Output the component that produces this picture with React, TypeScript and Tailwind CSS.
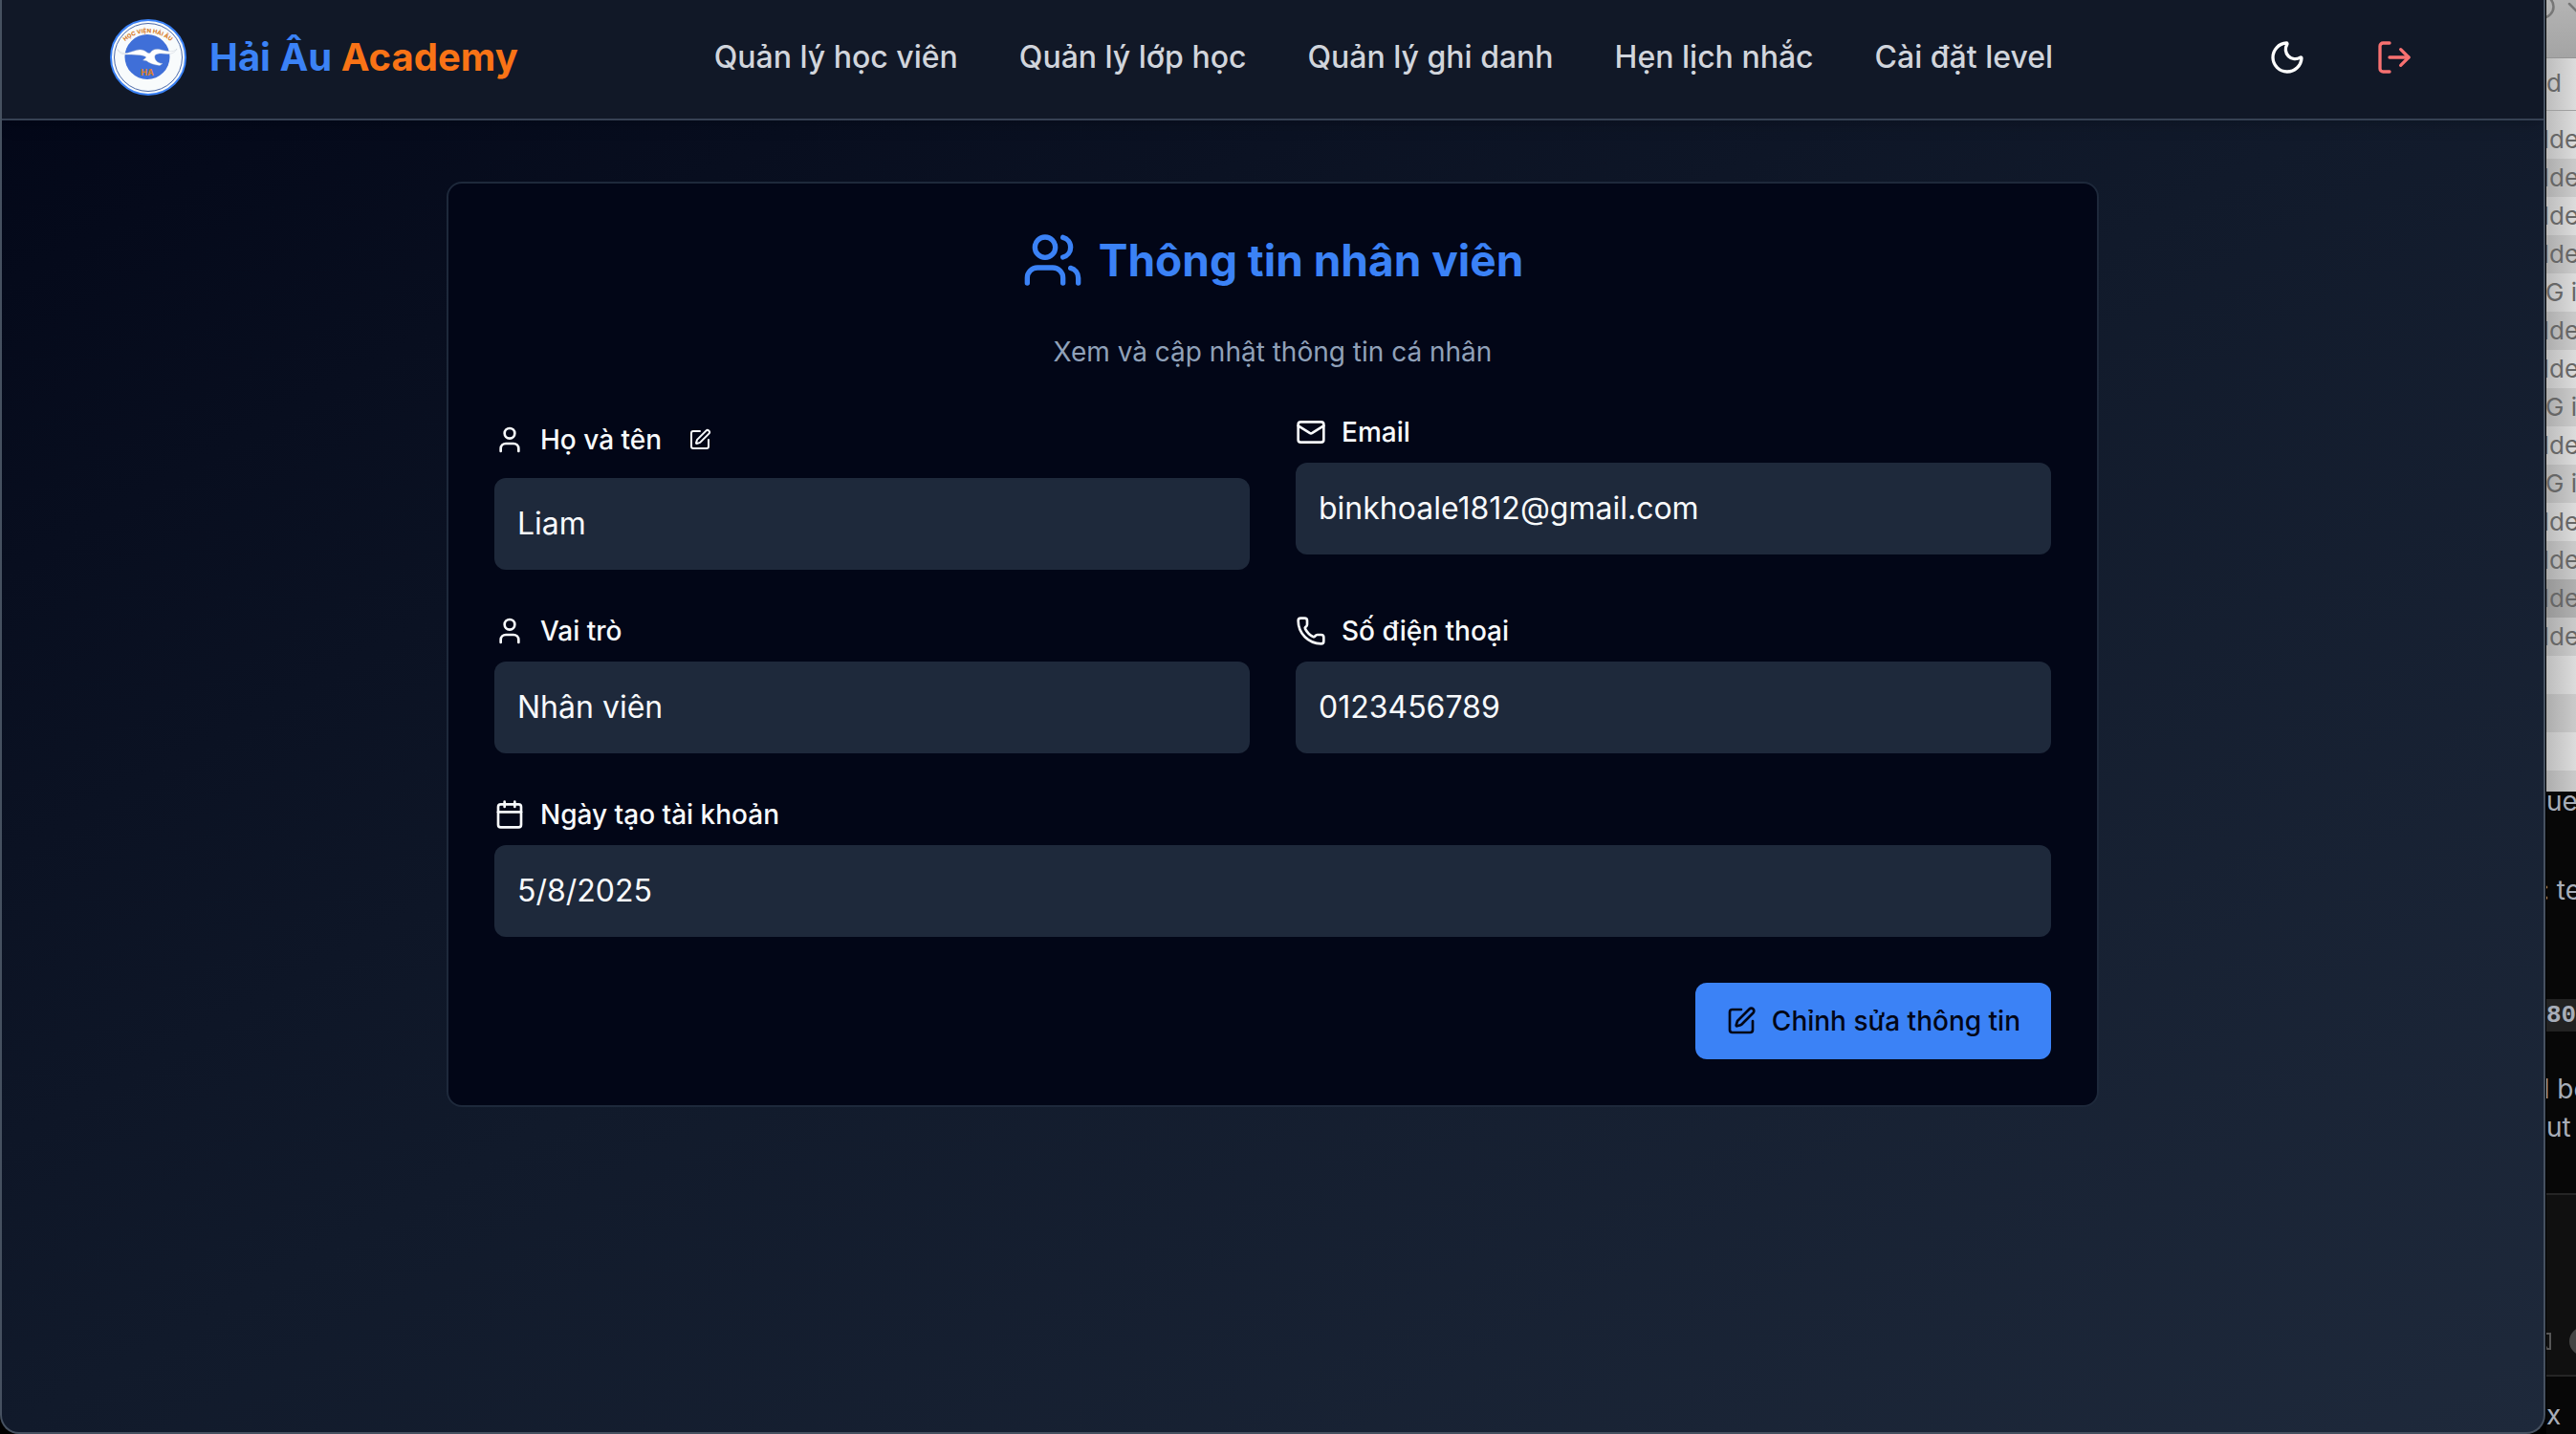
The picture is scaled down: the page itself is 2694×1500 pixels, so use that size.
import type { ReactNode } from "react";
import { Calendar, LogOut, Mail, Moon, Phone, SquarePen, User, Users } from "lucide-react";

const navItems = [
  "Quản lý học viên",
  "Quản lý lớp học",
  "Quản lý ghi danh",
  "Hẹn lịch nhắc",
  "Cài đặt level",
];

const fileRows = ["lde", "lde", "lde", "lde", "G i", "lde", "lde", "G i", "lde", "G i", "lde", "lde", "lde", "lde", "", "", "", ""];
const selectedRow = 12;

function Logo() {
  return (
    <svg viewBox="0 0 80 80" className="size-20" role="img" aria-label="Học viện Hải Âu">
      <circle cx="40" cy="40" r="39" fill="#f8fbfc" stroke="#3b82f6" strokeWidth="2" />
      <circle cx="40" cy="40" r="35.5" fill="none" stroke="#4d6aa8" strokeWidth="1" />
      <circle cx="39" cy="39.5" r="23.5" fill="#3f6fd8" />
      <path id="logo-arc" d="M12 27A36 36 0 0 1 67 27" fill="none" />
      <text fontFamily="Inter, sans-serif" fontSize="6" fontWeight="800" fill="#d9812f">
        <textPath href="#logo-arc" startOffset="50%" textAnchor="middle">HỌC VIỆN HẢI ÂU</textPath>
      </text>
      <path
        d="M8 31.500C10 35 14 36 18 35.500C24 34 30 30 36 33C39 35 40 36 42 35.500C44 32 47 31 51 31.500C58 33 66 36 70 31C68 35 65 36 61 36.500C55 36 50 35 47 38C46 42 49 46 55 46.500L52 48.500C46 48 41 46 38 43.500L34.500 43L38 40C35 36.500 24 37.500 16 37C11 36.500 9 34.500 8 31.500Z"
        fill="#fff"
        stroke="#b9c3cf"
        strokeWidth="0.400"
      />
      <text x="39" y="58.500" textAnchor="middle" fontFamily="Inter, sans-serif" fontSize="9" fontWeight="800" fill="#d9812f">HA</text>
    </svg>
  );
}

function Header() {
  return (
    <header className="relative flex items-center justify-between border-b-2 border-gray-700 bg-[#111827] pt-5 pr-[116px] pb-6 pl-[113px] shadow-lg">
      <a href="#home" className="flex items-center gap-6 text-[40px] leading-[60px] font-bold whitespace-nowrap">
        <Logo />
        <span>
          <span className="text-[#3b82f6]">Hải Âu</span> <span className="text-[#f97316]">Academy</span>
        </span>
      </a>
      <nav className="flex items-center gap-16">
        {navItems.map((item) => (
          <a key={item} href="#nav" className="text-[32px] leading-[48px] font-medium whitespace-nowrap text-gray-300">
            {item}
          </a>
        ))}
      </nav>
      <div className="flex items-center gap-8">
        <button type="button" aria-label="Chế độ tối" className="flex size-20 items-center justify-center text-white">
          <Moon size={40} />
        </button>
        <button type="button" aria-label="Đăng xuất" className="flex size-20 items-center justify-center text-[#f87171]">
          <LogOut size={40} />
        </button>
      </div>
    </header>
  );
}

type FieldProps = { id: string; label: string; value: string; icon: ReactNode; action?: ReactNode; wide?: boolean };

function Field({ id, label, value, icon, action, wide }: FieldProps) {
  return (
    <div className={wide ? "col-span-2 flex flex-col gap-4" : "flex flex-col gap-4"}>
      <div className="flex items-center gap-4">
        <label htmlFor={id} className="flex items-center gap-4 text-[28px] leading-8 font-medium text-slate-50">
          {icon}
          {label}
        </label>
        {action}
      </div>
      <input id={id} readOnly value={value} className="h-24 w-full rounded-xl bg-[#1e293b] px-6 pb-0.5 text-[32px] text-slate-50 outline-none" />
    </div>
  );
}

function ProfileCard() {
  return (
    <section className="w-full max-w-[1728px] rounded-2xl border-2 border-[#1e293b] bg-[#020617] p-12">
      <div className="mb-12 flex flex-col items-center gap-11">
        <h1 className="flex items-center gap-4 text-[46px] leading-[64px] font-bold text-[#3b82f6]">
          <Users size={64} />
          Thông tin nhân viên
        </h1>
        <p className="text-[28px] leading-10 text-slate-400">Xem và cập nhật thông tin cá nhân</p>
      </div>
      <form className="grid grid-cols-2 gap-12">
        <Field
          id="name"
          label="Họ và tên"
          value="Liam"
          icon={<User size={32} />}
          action={
            <button type="button" aria-label="Sửa họ và tên" className="flex size-12 items-center justify-center text-slate-50">
              <SquarePen size={24} />
            </button>
          }
        />
        <Field id="email" label="Email" value="binkhoale1812@gmail.com" icon={<Mail size={32} />} />
        <Field id="role" label="Vai trò" value="Nhân viên" icon={<User size={32} />} />
        <Field id="phone" label="Số điện thoại" value="0123456789" icon={<Phone size={32} />} />
        <Field id="created" label="Ngày tạo tài khoản" value="5/8/2025" icon={<Calendar size={32} />} wide />
        <div className="col-span-2 flex justify-end">
          <button type="button" className="flex h-20 items-center gap-4 rounded-xl bg-[#3b82f6] px-8 text-[28px] font-medium text-[#020617]">
            <SquarePen size={32} />
            Chỉnh sửa thông tin
          </button>
        </div>
      </form>
    </section>
  );
}

function BackgroundWindows() {
  return (
    <aside className="flex w-8 shrink-0 flex-col overflow-hidden border-l border-black bg-[#070707] whitespace-nowrap text-[#a7adb8]">
      <div className="flex h-[828px] flex-col overflow-hidden bg-linear-to-r from-[#bdbdbd] to-[#dcdcdc] text-[26px] text-[#666666]">
        <div className="h-[61px] shrink-0 border-b border-[#949494] bg-linear-to-b from-[#b4b4b4] to-[#a4a4a4]">
          <svg viewBox="0 0 31 60" className="h-[60px] w-full" fill="none" stroke="#777777" strokeWidth="2.500">
            <circle cx="-4" cy="7" r="11.500" />
            <path d="M24 4l8 8" strokeLinecap="round" />
          </svg>
        </div>
        <div className="flex h-[55px] shrink-0 items-center border-b border-[#a0a0a0] pb-1">d</div>
        <div className="h-2.5 shrink-0" />
        {fileRows.map((text, i) => (
          <div
            key={i}
            className={
              i === selectedRow
                ? "flex h-10 shrink-0 items-center justify-center bg-black/20 pb-0.5"
                : "flex h-10 shrink-0 items-center justify-center pb-0.5 odd:bg-black/8"
            }
          >
            {text}
          </div>
        ))}
      </div>
      <div className="flex h-[67px] items-start text-[28px] leading-5">ue</div>
      <div className="flex h-[150px] items-start justify-center pt-6 text-[28px] leading-6">: te</div>
      <div className="h-[34px] overflow-hidden bg-[#222222] font-['Liberation_Mono'] text-[26px] leading-[34px] font-bold">80p</div>
      <div className="mt-10 flex h-10 items-center justify-center text-[28px]">d be</div>
      <div className="flex h-10 items-center text-[28px]">ut</div>
      <div className="mt-[49px] flex h-[192px] items-end border-y-2 border-[#252525] bg-[#101010]">
        <svg viewBox="0 0 31 60" className="h-[60px] w-full" fill="none">
          <path d="M0 17h4v16H1l-2-3" stroke="#555555" strokeWidth="2" />
          <circle cx="39" cy="25" r="15" fill="#444444" />
        </svg>
      </div>
      <div className="flex grow items-end pb-1 text-[28px] leading-8">x</div>
    </aside>
  );
}

export default function App() {
  return (
    <div className="flex min-h-screen bg-black font-['Inter',sans-serif]">
      <div className="flex min-w-0 grow flex-col overflow-hidden rounded-b-[20px] border-x-2 border-b-2 border-[#465160] bg-linear-to-br/srgb from-[#020617] via-[#111a2b] to-[#1e293b]">
        <Header />
        <main className="flex justify-center px-16 pt-16 pb-24">
          <ProfileCard />
        </main>
      </div>
      <BackgroundWindows />
    </div>
  );
}
